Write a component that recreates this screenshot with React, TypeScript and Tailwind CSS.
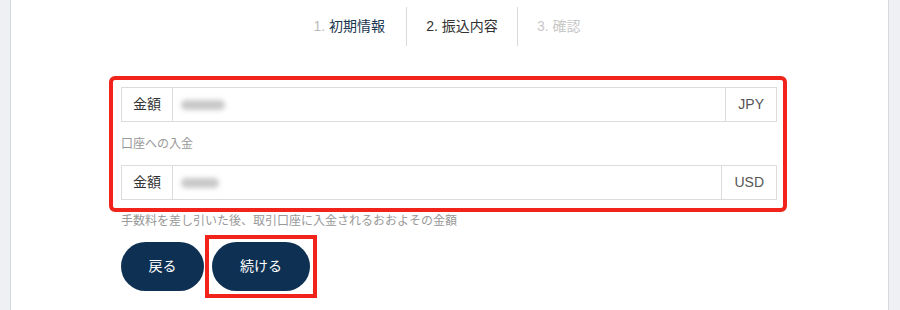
const font = {
  fontFamily: '"Liberation Sans", "Noto Sans CJK JP", sans-serif',
};

const AmountField = ({ currency, blobWidth }: { currency: string; blobWidth: string }) => (
  <div className="flex h-[35px] border border-[#dcdcdc] text-[14px] text-[#333]">
    <div className="flex items-center px-[11px] border-r border-[#dcdcdc]">金額</div>
    <div className="flex-1 flex items-center pl-[8px]">
      <span className={`h-[10px] ${blobWidth} rounded-full bg-[#c8c8c8] blur-[2.5px]`} />
    </div>
    <div className="flex items-center px-3 border-l border-[#dcdcdc] text-[#555]">{currency}</div>
  </div>
);

export default function App() {
  return (
    <div className="w-[900px] h-[310px] bg-[#eef0f4] flex overflow-hidden" style={font}>
      <div className="w-[10px] shrink-0" />
      <div className="flex-1 bg-white border-x border-[#d6d9de] flex flex-col">
        {/* steps */}
        <div className="flex justify-center pl-[25px] pt-[7px]">
          <div className="w-[112px] h-[39px] flex items-center justify-end pr-[21px] text-[14px]">
            <span className="text-[#bbb]">1.&nbsp;</span>
            <span className="text-[#1b3650]">初期情報</span>
          </div>
          <div className="w-[112px] h-[39px] flex items-center justify-center border-x border-[#d9d9d9] text-[14px] text-[#333]">
            2. 振込内容
          </div>
          <div className="w-[112px] h-[39px] flex items-center pl-[19px] text-[14px] text-[#c8c8c8]">
            3. 確認
          </div>
        </div>

        {/* form */}
        <div className="ml-[98px] w-[678px] mt-[30px]">
          <div className="border-4 border-[#f2231b] rounded-[6px] pl-2 pr-1.5 pt-[7px] pb-[8px]">
            <AmountField currency="JPY" blobWidth="w-[44px]" />
            <div className="h-[43px] flex items-center text-[12px] text-[#999]">口座への入金</div>
            <AmountField currency="USD" blobWidth="w-[38px]" />
          </div>
          <p className="ml-3 mt-[2px] text-[12px] leading-[14px] text-[#999]">
            手数料を差し引いた後、取引口座に入金されるおおよその金額
          </p>
          <div className="ml-3 mt-[7px] flex items-center">
            <button className="w-[83px] h-[49px] rounded-full bg-[#0e3153] text-white text-[14px]">戻る</button>
            <div className="ml-[1px] border-4 border-[#f2231b] p-[3px]">
              <button className="w-[98px] h-[49px] rounded-full bg-[#0e3153] text-white text-[14px] block">
                続ける
              </button>
            </div>
          </div>
        </div>
      </div>
      <div className="w-[11px] shrink-0" />
    </div>
  );
}
